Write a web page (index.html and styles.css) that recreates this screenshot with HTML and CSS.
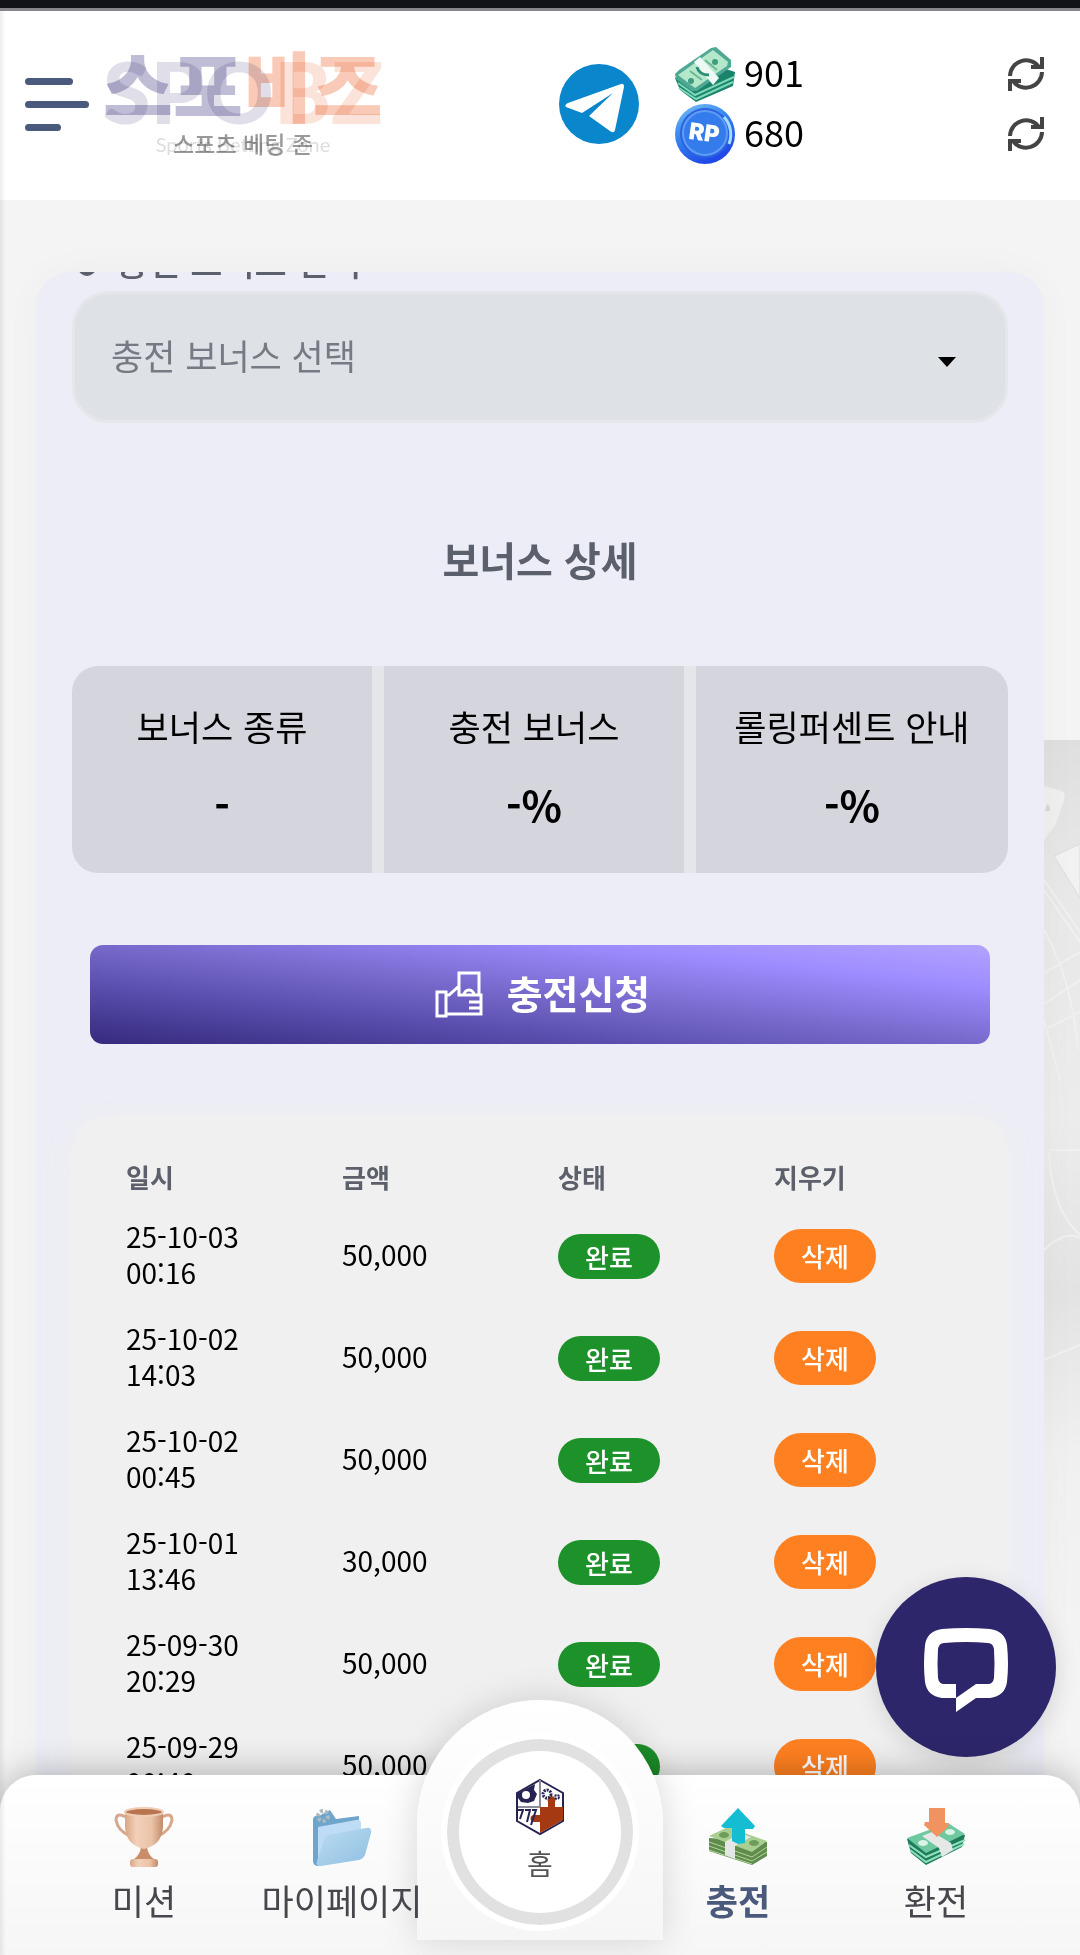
FILE: index.html
```
<!DOCTYPE html>
<html lang="ko">
	<head>
		<title>스포비즈 - 충전</title>
		<meta charset="utf-8">
		<meta name="viewport" content="width=device-width">
		<link rel="stylesheet" href="styles.css">
	</head>
	<body>
		<header class="header">
			<button class="menu" type="button" aria-label="메뉴"><span></span><span></span><span></span></button>
			<a class="logo" href="#" aria-label="스포비즈">
				<svg viewBox="0 0 278 120" width="278" height="120">
					<g class="logo-en">
						<text x="-2" y="80"><tspan class="navy">SPO</tspan><tspan class="orange">BZ</tspan></text>
						<text class="tag" x="138" y="108">Sports Betting Zone</text>
					</g>
					<g class="logo-ko">
						<text x="-2" y="72"><tspan class="navy">스포</tspan><tspan class="orange">비즈</tspan></text>
						<text class="tag" x="138" y="109">스포츠 베팅 존</text>
					</g>
				</svg>
			</a>
			<a class="telegram" href="#" aria-label="텔레그램">
				<svg viewBox="0 0 80 80" width="80" height="80">
					<circle cx="40" cy="40" r="40" fill="#0a86cc"/>
					<path d="M7 43 Q5 41 9 39 L62 20 Q65 19 65 23 L56 66 Q55 70 51 67 L30 52 L54 29 L23 49 Z" fill="#fff"/>
				</svg>
			</a>
			<div class="wallet">
				<div class="wallet-row">
					<svg viewBox="0 0 60 60" width="60" height="60">
						<path d="M0 34 L5 46 L21 58 L58 42 L60 28 L30 18Z" fill="#19836c"/>
						<path d="M3 39 L20 51 L59 33 M4 44 L21 55 L58 38" fill="none" stroke="#7ed8b8" stroke-width="2"/>
						<path d="M0 30 L4 26 L36 4 L41 3 L56 16 L56 23 L22 47 L17 47 L1 35Z" fill="#4fa894"/>
						<path d="M3 31 L38 6 L53 18 L52 22 L20 44Z" fill="#b5e8cb"/>
						<path d="M19 18 L25 13 L44 34 L38 41Z" fill="#eef8f5"/>
						<circle cx="40" cy="18" r="3" fill="#3f9c80"/>
						<circle cx="16" cy="37" r="3" fill="#3f9c80"/>
						<path d="M15 27 L27 36 M30 16 L42 26" stroke="#6cb795" stroke-width="2"/>
						<path d="M22 23 Q24 31 34 31" fill="none" stroke="#2d8d76" stroke-width="3"/>
					</svg>
					<span class="amount">901</span>
					<button class="refresh" type="button" aria-label="보유금 새로고침">
						<svg viewBox="0 0 36 36" width="36" height="36"><path d="M2 20 A16 16 0 0 1 31 11 M34 16 A16 16 0 0 1 5 25 M34 1 V11 H23 M2 35 V25 H13"/></svg>
					</button>
				</div>
				<div class="wallet-row">
					<svg viewBox="0 0 60 60" width="60" height="60">
						<defs>
							<linearGradient id="coin" x1="0" y1="0" x2=".5" y2="1"><stop offset="0" stop-color="#79c2f4"/><stop offset=".5" stop-color="#3382ef"/><stop offset="1" stop-color="#2048e8"/></linearGradient>
						</defs>
						<circle cx="30" cy="30" r="30" fill="url(#coin)"/>
						<circle cx="30" cy="29" r="25" fill="#2a62df"/>
						<circle cx="30" cy="29" r="22" fill="#347bec" stroke="#5f9df5" stroke-width="2"/>
						<path d="M49 13 A26 26 0 0 1 54 40" fill="none" stroke="#a6dcff" stroke-width="3"/>
						<text class="coin-text" x="29" y="37" transform="rotate(8 30 30)">RP</text>
					</svg>
					<span class="amount">680</span>
					<button class="refresh" type="button" aria-label="포인트 새로고침">
						<svg viewBox="0 0 36 36" width="36" height="36"><path d="M2 20 A16 16 0 0 1 31 11 M34 16 A16 16 0 0 1 5 25 M34 1 V11 H23 M2 35 V25 H13"/></svg>
					</button>
				</div>
			</div>
		</header>

		<main class="main">
			<!-- casino backdrop, only its right edge shows beside the panel -->
			<svg class="backdrop" viewBox="0 0 36 950" width="36" height="950" aria-hidden="true">
				<defs>
					<linearGradient id="fade" x1="0" y1="0" x2="0" y2="1"><stop offset="0" stop-color="#dfdfdf"/><stop offset=".15" stop-color="#e8e8e8"/><stop offset=".4" stop-color="#ececec"/><stop offset=".58" stop-color="#e3e3e3"/><stop offset=".75" stop-color="#f0f0f0"/><stop offset="1" stop-color="#f4f4f4"/></linearGradient>
				</defs>
				<rect width="36" height="950" fill="url(#fade)"/>
				<path d="M0 46 L18 51 Q22 53 20 60 L12 84 L0 100Z" fill="#efefef"/>
				<path d="M10 116 L36 104 V158Z" fill="#f2f2f2" stroke="#dcdcdc"/>
				<path d="M3 64 q4 2 3 7 h-5z" fill="#d8d8d8"/>
				<g fill="none" stroke="#f0f0f0" stroke-width="2">
					<path d="M0 140 L36 192 M0 150 L36 202 M0 233 L36 212 M0 264 L36 240 M4 288 L36 272 M0 190 Q28 240 34 310 M0 280 L16 340"/>
					<path d="M5 410 H36 M5 412 Q8 470 36 495 M0 510 Q20 490 36 498 M0 620 L36 605"/>
				</g>
			</svg>
			<section class="panel">
				<label class="field-label" for="bonus">충전 보너스 선택</label>
				<div class="select-wrap">
					<select id="bonus" class="select">
						<option>충전 보너스 선택</option>
					</select>
				</div>

				<h2 class="title">보너스 상세</h2>
				<dl class="stats">
					<div class="stat"><dt>보너스 종류</dt><dd>-</dd></div>
					<div class="stat"><dt>충전 보너스</dt><dd>-%</dd></div>
					<div class="stat"><dt>롤링퍼센트 안내</dt><dd>-%</dd></div>
				</dl>

				<button class="submit" type="button">
					<svg viewBox="0 0 48 48" width="48" height="48">
						<path d="M2 21 H11 V45 H2Z M11 24 H14 L24 15 V2 H44 V24 M11 43 H46 V24 H24 V15 M46 31 H34 M46 37 H34 M29 24 a5 5 0 0 1 10 0"/>
					</svg>
					<span>충전신청</span>
				</button>

				<div class="history">
					<table class="table">
						<thead>
							<tr><th>일시</th><th>금액</th><th>상태</th><th>지우기</th></tr>
						</thead>
						<tbody>
							<tr><td>25-10-03<br>00:16</td><td>50,000</td><td><span class="status">완료</span></td><td><button class="delete" type="button">삭제</button></td></tr>
							<tr><td>25-10-02<br>14:03</td><td>50,000</td><td><span class="status">완료</span></td><td><button class="delete" type="button">삭제</button></td></tr>
							<tr><td>25-10-02<br>00:45</td><td>50,000</td><td><span class="status">완료</span></td><td><button class="delete" type="button">삭제</button></td></tr>
							<tr><td>25-10-01<br>13:46</td><td>30,000</td><td><span class="status">완료</span></td><td><button class="delete" type="button">삭제</button></td></tr>
							<tr><td>25-09-30<br>20:29</td><td>50,000</td><td><span class="status">완료</span></td><td><button class="delete" type="button">삭제</button></td></tr>
							<tr><td>25-09-29<br>00:40</td><td>50,000</td><td><span class="status">완료</span></td><td><button class="delete" type="button">삭제</button></td></tr>
						</tbody>
					</table>
				</div>
			</section>
		</main>

		<button class="chat" type="button" aria-label="채팅 상담">
			<svg viewBox="0 0 84 84" width="84" height="84">
				<path d="M18 1 Q42 -1 66 1 Q81 3 83 17 Q85 36 83 54 Q81 68 66 70 H52 L32 84 V70 H18 Q3 68 1 54 Q-1 36 1 17 Q3 3 18 1Z" fill="#fff"/>
				<path d="M20 15 Q42 13 64 15 Q69 15 70 21 Q71 36 70 50 Q69 56 64 56 H52 L32 70 V56 H20 Q15 56 14 50 Q13 36 14 21 Q15 15 20 15Z" fill="#2d266a"/>
			</svg>
		</button>

		<nav class="nav">
			<a class="nav-item" href="#">
				<svg viewBox="0 0 60 60" width="60" height="60">
					<defs><linearGradient id="cup"><stop offset="0" stop-color="#dba584"/><stop offset=".3" stop-color="#f3d0b9"/><stop offset=".7" stop-color="#eac3a8"/><stop offset="1" stop-color="#c38a69"/></linearGradient></defs>
					<path d="M12 10 Q2 5 2 13 Q4 24 16 29 M48 10 Q58 5 58 13 Q56 24 44 29" fill="none" stroke="#d7a78b" stroke-width="3"/>
					<path d="M27 40 h6 q1 8 7 12 h-20 q6-4 7-12z" fill="#c98d69"/>
					<rect x="16" y="52" width="28" height="8" rx="3" fill="url(#cup)"/>
					<path d="M11 4 H49 V20 Q48 38 30 42 Q12 38 11 20Z" fill="url(#cup)"/>
					<ellipse cx="30" cy="5" rx="19" ry="4" fill="#b9754f" stroke="#efcdb6" stroke-width="2"/>
				</svg>
				<span>미션</span>
			</a>
			<a class="nav-item" href="#">
				<svg viewBox="0 0 60 60" width="60" height="60">
					<defs><linearGradient id="folder" x1="0" y1="0" x2="1" y2="1"><stop offset="0" stop-color="#bcdcf1"/><stop offset="1" stop-color="#8fc0e2"/></linearGradient></defs>
					<path d="M1 12 Q2 8 7 9 L18 3 L24 12 L47 9 V52 L5 59 Q1 58 1 54Z" fill="#6ea5cd"/>
					<path d="M6 20 L44 13 Q49 12 49 17 V48 L6 56Z" fill="#bfdcf6"/>
					<path d="M16 28 L54 21 Q60 20 59 26 L53 48 Q51 52 47 53 L9 59 Q3 59 5 54 L12 32 Q13 29 16 28Z" fill="url(#folder)"/>
					<circle cx="11" cy="9" r="5" fill="none" stroke="#aeb9c2" stroke-width="4" stroke-dasharray="3 2"/>
				</svg>
				<span>마이페이지</span>
			</a>
			<a class="nav-home" href="#">
				<span class="home-ring">
					<svg viewBox="0 0 48 56" width="48" height="56">
						<path d="M24 1 L47 14 V42 L24 55 L1 42 V14Z" fill="#fff" stroke="#262452" stroke-width="2"/>
						<path d="M2 14 L19 5 L18 11 L21 15 L18 22 L12 24 L5 23 L2 19Z" fill="#262452"/>
						<circle cx="10" cy="16" r="4" fill="#fff"/>
						<path d="M24 1 V28 H2" fill="none" stroke="#8b8b99" stroke-width="2"/>
						<path d="M24 28 H32 V23 a4 4 0 1 1 7 0 V28 H47 V41 L24 54 V43 H18 a3 3 0 0 1 0-7 H24Z" fill="#a53a12"/>
						<circle cx="31" cy="15" r="4" fill="none" stroke="#262452" stroke-width="3" stroke-dasharray="2 1"/>
						<circle cx="41" cy="18" r="2" fill="none" stroke="#262452" stroke-width="2" stroke-dasharray="2 1"/>
						<path d="M2 31 h5 l-3 9 M9 31 h5 l-3 12 M16 31 h4 l-5 15" fill="none" stroke="#262452" stroke-width="2"/>
					</svg>
					<span>홈</span>
				</span>
			</a>
			<a class="nav-item active" href="#">
				<svg viewBox="0 0 60 60" width="60" height="60">
					<path d="M1 31 V44 L44 58 L59 49 V35Z" fill="#5f8b4f"/>
					<path d="M1 35 L44 50 L59 40 M1 39 L44 54 L59 45 M1 43 L44 57" fill="none" stroke="#b2d494" stroke-width="1"/>
					<path d="M1 29 L20 20 L59 34 L44 45Z" fill="#a9cf90"/>
					<ellipse cx="16" cy="28" rx="5" ry="3" fill="#6e9c5d"/><ellipse cx="46" cy="36" rx="5" ry="3" fill="#6e9c5d"/>
					<path d="M17 35 L32 26 L43 30 L27 39 V52 L17 48Z" fill="#e3e7e6"/>
					<path d="M30 1 L47 19 L45 22 H37 V36 L30 37 L24 34 V21 H16 L13 19Z" fill="#15bdd2"/>
				</svg>
				<span>충전</span>
			</a>
			<a class="nav-item" href="#">
				<svg viewBox="0 0 60 60" width="60" height="60">
					<path d="M1 32 L5 46 L20 58 L56 40 L59 28 L30 22Z" fill="#1e7d5b"/>
					<path d="M3 38 L20 50 L59 33 M4 43 L20 55 L58 37" fill="none" stroke="#8fdfbc" stroke-width="2"/>
					<path d="M1 31 L42 16 L59 27 L20 46Z" fill="#6fc9a0"/>
					<ellipse cx="17" cy="36" rx="5" ry="3" fill="#d9f3e5"/><ellipse cx="44" cy="25" rx="5" ry="3" fill="#d9f3e5"/>
					<path d="M16 29 L26 25 L45 36 L47 43 L36 50 L33 41Z" fill="#e6e8e7"/>
					<path d="M23 1 H39 V16 H43 L42 20 L31 30 L18 18 L19 15 H23Z" fill="#f0935f"/>
				</svg>
				<span>환전</span>
			</a>
		</nav>
	</body>
</html>
```
FILE: styles.css
```
* { box-sizing: border-box; }
html { height: 100%; }
body {
	margin: 0;
	height: 100%;
	display: flex;
	flex-direction: column;
	overflow: hidden;
	position: relative;
	background-color: #f4f4f4;
	color: #000;
	font-family: "Noto Sans CJK KR", sans-serif;
	font-size: 28px;
}
/* page edge shade */
body::after {
	content: '';
	position: absolute;
	inset: 11px auto 0 0;
	width: 6px;
	background: linear-gradient(to right, rgba(0,0,0,.07), rgba(0,0,0,0));
	pointer-events: none;
}
button, select {
	margin: 0;
	padding: 0;
	border: 0;
	background: none;
	font-family: inherit;
	font-size: inherit;
	color: inherit;
}
a { color: inherit; text-decoration: none; }
svg { display: block; flex: none; overflow: visible; }

.header {
	flex: none;
	display: flex;
	align-items: center;
	height: 200px;
	padding: 11px 36px 3px 25px;
	background: linear-gradient(#111318 0 8px, #85858a 8px 11px, #fff 11px);
}
.menu {
	display: flex;
	flex-direction: column;
	gap: 16px;
	width: 64px;
	margin-right: 16px;
}
.menu span {
	width: 48px;
	height: 7px;
	border-radius: 4px;
	background-color: #4a5a7c;
}
.menu span:nth-child(2) { width: 64px; }
.menu span:nth-child(3) { width: 36px; }
.logo text { font-weight: 900; }
.logo-ko { font-size: 76px; mix-blend-mode: multiply; }
.logo-en { font-family: Lato, sans-serif; font-size: 86px; }
.logo-ko .navy { fill: #bfbcd6; }
.logo-ko .orange { fill: #f9cab7; }
.logo-en .navy { fill: #e0dfe9; }
.logo-en .orange { fill: #fbe3da; }
.logo .tag { text-anchor: middle; }
.logo-ko .tag { font-size: 23px; font-weight: 500; fill: #999; }
.logo-en .tag { font-size: 20px; font-weight: 400; fill: #ddd; }
.telegram { margin-left: auto; margin-right: 36px; }
.wallet {
	flex: 0 0 369px;
}
.wallet-row {
	display: flex;
	align-items: center;
	gap: 9px;
	height: 60px;
}
.amount {
	padding-bottom: 6px;
	font-size: 36px;
}
.coin-text {
	font-family: Inter, sans-serif;
	font-size: 23px;
	font-weight: 900;
	text-anchor: middle;
	fill: #fff;
}
.refresh { margin-left: auto; }
.refresh path { fill: none; stroke: #444; stroke-width: 4; }

.main {
	flex: 1 1 0;
	min-height: 0;
	position: relative;
	padding: 72px 36px 0;
	overflow: hidden;
}
.backdrop {
	position: absolute;
	top: 540px;
	right: 0;
}
.panel {
	position: relative;
	height: 100%;
	padding: 0 36px;
	border-radius: 36px 36px 0 0;
	background-color: #ecedf6;
	box-shadow: 0 0 40px rgba(0,0,0,.03);
	overflow: hidden;
}
.field-label {
	display: flex;
	align-items: center;
	gap: 20px;
	margin-top: -37px;
	padding: 0 0 4px 6px;
	color: #5c606c;
	font-size: 35px;
	font-weight: 500;
	line-height: 52px;
}
.field-label::before {
	content: '';
	width: 18px;
	height: 18px;
	margin-top: 12px;
	border-radius: 50%;
	background-color: #5c606c;
}
.select-wrap { position: relative; }
.select-wrap::after {
	content: '';
	position: absolute;
	top: 66px;
	right: 52px;
	border: 9px solid transparent;
	border-top: 10px solid #000;
	border-bottom: 0;
	pointer-events: none;
}
.select {
	appearance: none;
	display: block;
	width: 100%;
	height: 132px;
	padding: 0 36px 5px;
	border: 3px solid #e5e7ea;
	border-radius: 36px;
	background-color: #dee1e5;
	color: #777a85;
	font-size: 35px;
}
.title {
	margin: 106px 0 77px;
	color: #5c606c;
	font-size: 40px;
	font-weight: 700;
	line-height: 60px;
	text-align: center;
}
.stats {
	display: flex;
	margin: 0;
	height: 207px;
	border-radius: 26px;
	background-color: #d5d5de;
}
.stat {
	width: calc(100% / 3);
	padding-top: 34px;
	text-align: center;
}
.stat:not(:last-child) { border-right: 12px solid #e5e6ea; }
.stat dt { font-size: 35px; line-height: 52px; }
.stat dd {
	margin: 22px 0 0;
	font-size: 42px;
	font-weight: 700;
	line-height: 60px;
}
.submit {
	display: flex;
	align-items: center;
	justify-content: center;
	gap: 24px;
	width: calc(100% - 36px);
	height: 99px;
	margin: 72px 18px;
	padding-left: 5px;
	border-radius: 13px;
	background: linear-gradient(to top right, #352a7c, #5a4fae 30%, #7669cb 50%, #9d8cff 78%, #b3a3ff);
	color: #fff;
	font-size: 39px;
	font-weight: 700;
}
.submit span { padding-bottom: 6px; }
.submit path { fill: none; stroke: #fff; stroke-width: 3; }

.history {
	padding: 35px 18px 36px 54px;
	border-radius: 36px;
	background-color: #f0f0f0;
	box-shadow: 0 0 36px #f0f0f0;
}
.table {
	width: 100%;
	table-layout: fixed;
	border-collapse: collapse;
	line-height: 36px;
	text-align: left;
}
.table th, .table td { padding: 0; }
.table th {
	height: 52px;
	color: #5c606a;
	font-size: 26px;
	font-weight: 700;
}
.table td { height: 102px; }
.status, .delete {
	display: inline-block;
	margin-top: 4px;
	padding: 0 27px;
	border-radius: 27px;
	background-color: #1d922a;
	color: #fff;
	font-size: 26px;
	font-weight: 500;
	line-height: 45px;
	vertical-align: middle;
}
.delete {
	background-color: #ff8021;
	line-height: 54px;
}

.chat {
	position: absolute;
	right: 24px;
	bottom: 198px;
	display: flex;
	align-items: center;
	justify-content: center;
	width: 180px;
	height: 180px;
	padding-top: 6px;
	border-radius: 50%;
	background-color: #2d266a;
	box-shadow: 0 6px 24px rgba(0,0,0,.12);
}

.nav {
	flex: none;
	position: relative;
	display: flex;
	height: 180px;
	padding: 0 45px;
	border-radius: 36px 36px 0 0;
	background: linear-gradient(#fff, #f6f6f6);
	box-shadow: 0 0 36px rgba(0,0,0,.3);
}
.nav-item {
	flex: 1 1 0;
	position: relative;
	z-index: 1;
	display: flex;
	flex-direction: column;
	align-items: center;
	padding-top: 32px;
	gap: 8px;
	color: #45474d;
	font-size: 35px;
	line-height: 50px;
	white-space: nowrap;
}
.active { color: #4a5a7c; font-weight: 700; }
.nav-home {
	flex: 0 0 246px;
	height: 240px;
	margin: -75px -24px 0;
	padding: 39px 30px 0;
	border-radius: 123px 123px 0 0;
	background: linear-gradient(#fff, #f6f6f6);
	box-shadow: 0 0 36px rgba(0,0,0,.15);
}
.home-ring {
	display: flex;
	flex-direction: column;
	align-items: center;
	width: 186px;
	height: 186px;
	padding-top: 28px;
	border: 12px solid #e1e1e1;
	border-radius: 50%;
	background-color: #fff;
	outline: 6px solid #fff;
	color: #555;
	font-size: 28px;
	line-height: 40px;
	gap: 8px;
}
```
